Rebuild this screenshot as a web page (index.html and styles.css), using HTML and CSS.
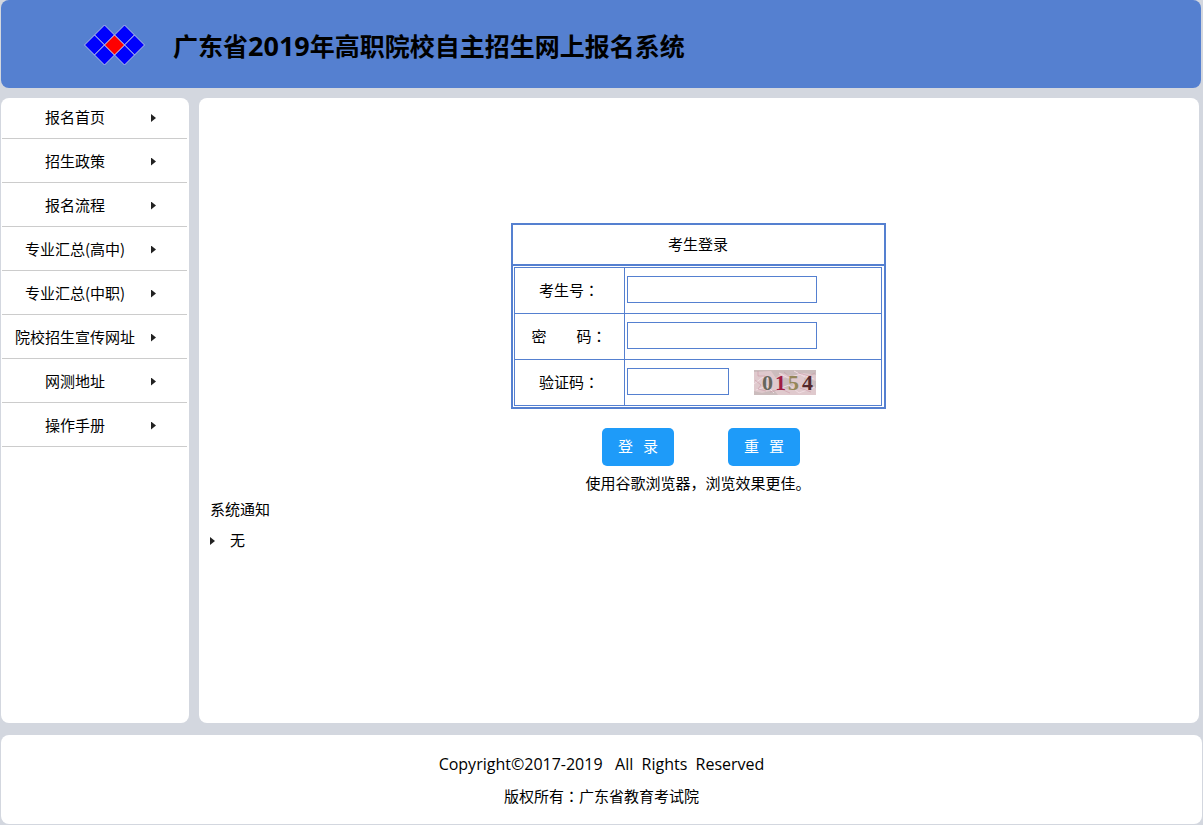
FILE: index.html
```html
<!DOCTYPE html>
<html lang="zh-CN">
<head>
<meta charset="utf-8">
<title>广东省2019年高职院校自主招生网上报名系统</title>
<link rel="stylesheet" href="styles.css">
</head>
<body>
<header class="header">
  <svg class="logo" viewBox="0 0 62 42" aria-hidden="true">
    <g fill="#0000fe" stroke="#b4bfe8" stroke-width="1">
      <path d="M20.500 1 30.500 11 20.500 21 10.500 11Z"/>
      <path d="M40.500 1 50.500 11 40.500 21 30.500 11Z"/>
      <path d="M10.500 11 20.500 21 10.500 31 .500 21Z"/>
      <path d="M50.500 11 60.500 21 50.500 31 40.500 21Z"/>
      <path d="M20.500 21 30.500 31 20.500 41 10.500 31Z"/>
      <path d="M40.500 21 50.500 31 40.500 41 30.500 31Z"/>
      <path d="M30.500 11 40.500 21 30.500 31 20.500 21Z" fill="#fe0000"/>
    </g>
  </svg>
  <h1 class="title">广东省<span class="year">2019</span>年高职院校自主招生网上报名系统</h1>
</header>
<div class="content">
  <nav class="sidebar">
    <ul class="menu">
      <li><a href="#">报名首页</a></li>
      <li><a href="#">招生政策</a></li>
      <li><a href="#">报名流程</a></li>
      <li><a href="#">专业汇总(高中)</a></li>
      <li><a href="#">专业汇总(中职)</a></li>
      <li><a href="#">院校招生宣传网址</a></li>
      <li><a href="#">网测地址</a></li>
      <li><a href="#">操作手册</a></li>
    </ul>
  </nav>
  <main class="main">
    <form class="login">
      <div class="panel">
        <h2 class="panel-title">考生登录</h2>
        <table class="fields">
          <tr>
            <th scope="row"><label for="account">考生号<span class="colon" lang="zh-TW">：</span></label></th>
            <td><input class="field" id="account" type="text"></td>
          </tr>
          <tr>
            <th scope="row"><label for="password">密&#12288;&#12288;码<span class="colon" lang="zh-TW">：</span></label></th>
            <td><input class="field" id="password" type="password"></td>
          </tr>
          <tr>
            <th scope="row"><label for="code">验证码<span class="colon" lang="zh-TW">：</span></label></th>
            <td>
              <div class="code-row">
                <input class="field field-short" id="code" type="text">
                <svg class="captcha" viewBox="0 0 62 25" role="img" aria-label="验证码 0154">
                  <rect width="62" height="25" fill="#dfc9cd"/>
                  <path d="M0 0H62V5L50 3 38 6 27 3 22 8 17 1 0 2ZM24 10 34 7 40 13 36 20 27 17ZM0 21 8 23 20 20 24 25H0ZM50 8 62 11V18L52 15Z" fill="#cbbcbd"/>
                  <g fill="none" stroke="#f0dce2" stroke-width="1">
                    <path d="M0 14 9 7 18 10M2 20 13 16 20 23M25 3 34 8 47 4 60 9M22 20 35 15 45 23 61 17M40 1 51 7"/>
                  </g>
                  <g fill="none" stroke="#c78fa0" stroke-width="1" opacity=".5">
                    <path d="M4 1V6H11M1 10 7 15 4 19 12 21M16 22 27 19 36 23M30 2 38 9M44 3 55 6 61 3M46 18 57 22"/>
                  </g>
                  <g class="captcha-text">
                    <text x="8" y="20" fill="#66665c">0</text>
                    <text x="21" y="20" fill="#a01c44">1</text>
                    <text x="34" y="20" fill="#948658">5</text>
                    <text x="48" y="20" fill="#54282b">4</text>
                  </g>
                </svg>
              </div>
            </td>
          </tr>
        </table>
      </div>
      <div class="actions">
        <button class="button" type="submit">登&nbsp;&nbsp; 录</button>
        <button class="button" type="reset">重&nbsp;&nbsp; 置</button>
      </div>
      <p class="tip">使用谷歌浏览器，浏览效果更佳。</p>
    </form>
    <section class="notice">
      <h2 class="notice-title">系统通知</h2>
      <ul class="notice-list">
        <li>无</li>
      </ul>
    </section>
  </main>
</div>
<footer class="footer">
  <p class="copyright">Copyright©2017-2019&nbsp;&nbsp; All&nbsp; Rights&nbsp; Reserved</p>
  <p>版权所有<span class="colon" lang="zh-TW">：</span>广东省教育考试院</p>
</footer>
</body>
</html>
```
FILE: styles.css
```css
* {
  box-sizing: border-box;
}

body {
  display: flex;
  flex-direction: column;
  min-height: 100vh;
  margin: 0;
  padding: 0 1px 1px;
  background: #d3d7df;
  color: #000;
  font: 15px/20px "Noto Sans CJK SC", sans-serif;
}

h1, h2, p, ul {
  margin: 0;
  padding: 0;
  font-size: inherit;
  font-weight: normal;
}

ul {
  list-style: none;
}

a {
  color: inherit;
  text-decoration: none;
}

/* Centres the full-width colon in its cell */
.colon {
  font-family: "Noto Sans CJK TC", sans-serif;
}

.header {
  display: flex;
  align-items: center;
  gap: 27px;
  height: 88px;
  margin-right: 1px;
  padding: 2px 83px 0;
  border-radius: 8px;
  background: #5580d0;
}

.logo {
  width: 62px;
  height: 42px;
}

.title {
  font-size: 25px;
  font-weight: bold;
  line-height: 36px;
}

.year {
  font-family: "Open Sans", sans-serif;
  font-size: 27px;
}

.content {
  display: grid;
  flex: 1;
  grid-template-columns: 188px 1fr;
  gap: 10px;
  margin: 10px 3px 12px 0;
}

.sidebar,
.main,
.footer {
  border-radius: 8px;
  background: #fff;
}

.menu {
  padding: 0 2px 0 1px;
}

.menu a {
  display: grid;
  grid-template-columns: 1fr 5px;
  align-items: center;
  gap: 3px;
  height: 44px;
  padding-right: 31px;
  border-bottom: 1px solid #ccc;
  text-align: center;
}

.menu li:first-child a {
  height: 41px;
  padding-bottom: 2px;
}

.menu a::after,
.notice-list li::before {
  width: 5px;
  height: 8px;
  margin-top: 2px;
  background: #222;
  clip-path: polygon(0 0, 100% 50%, 0 100%);
  content: "";
}

.main {
  padding: 125px 12px 20px 10px;
}

.login {
  display: flex;
  flex-direction: column;
  align-items: center;
}

.panel {
  width: 375px;
  max-width: 100%;
  border: 2px solid #5580d0;
}

.panel-title {
  padding: 9px 0 10px;
  border-bottom: 2px solid #5580d0;
  text-align: center;
}

.fields {
  width: calc(100% - 3px);
  margin: 1px 2px 1px 1px;
  border-collapse: collapse;
}

.fields th,
.fields td {
  height: 46px;
  padding: 0 2px 2px;
  border: 1px solid #5580d0;
  font-weight: normal;
}

.fields th {
  width: 110px;
}

.field {
  display: block;
  width: 190px;
  height: 27px;
  padding: 0 4px;
  border: 1px solid #5580d0;
  background: #fff;
  font: inherit;
}

.field-short {
  width: 102px;
}

.code-row {
  display: flex;
  align-items: flex-end;
  gap: 25px;
}

.captcha {
  width: 62px;
  height: 25px;
}

.captcha-text {
  font: bold 22px "Liberation Serif", serif;
}

.actions {
  display: flex;
  gap: 54px;
  margin-top: 19px;
  padding-left: 6px;
}

.button {
  width: 72px;
  height: 38px;
  padding: 0 0 2px;
  border: 0;
  border-radius: 5px;
  background: #1e9bf9;
  color: #fff;
  font: inherit;
}

.tip {
  margin-top: 7px;
}

.notice {
  padding-left: 1px;
}

.notice-title {
  margin-top: 6px;
}

.notice-list li {
  display: flex;
  align-items: center;
  gap: 15px;
  margin-top: 11px;
}

.footer {
  padding: 19px 0 18px;
  text-align: center;
}

.footer p + p {
  margin-top: 12px;
}

.copyright {
  font-family: "Open Sans", sans-serif;
  font-size: 16px;
}
```
